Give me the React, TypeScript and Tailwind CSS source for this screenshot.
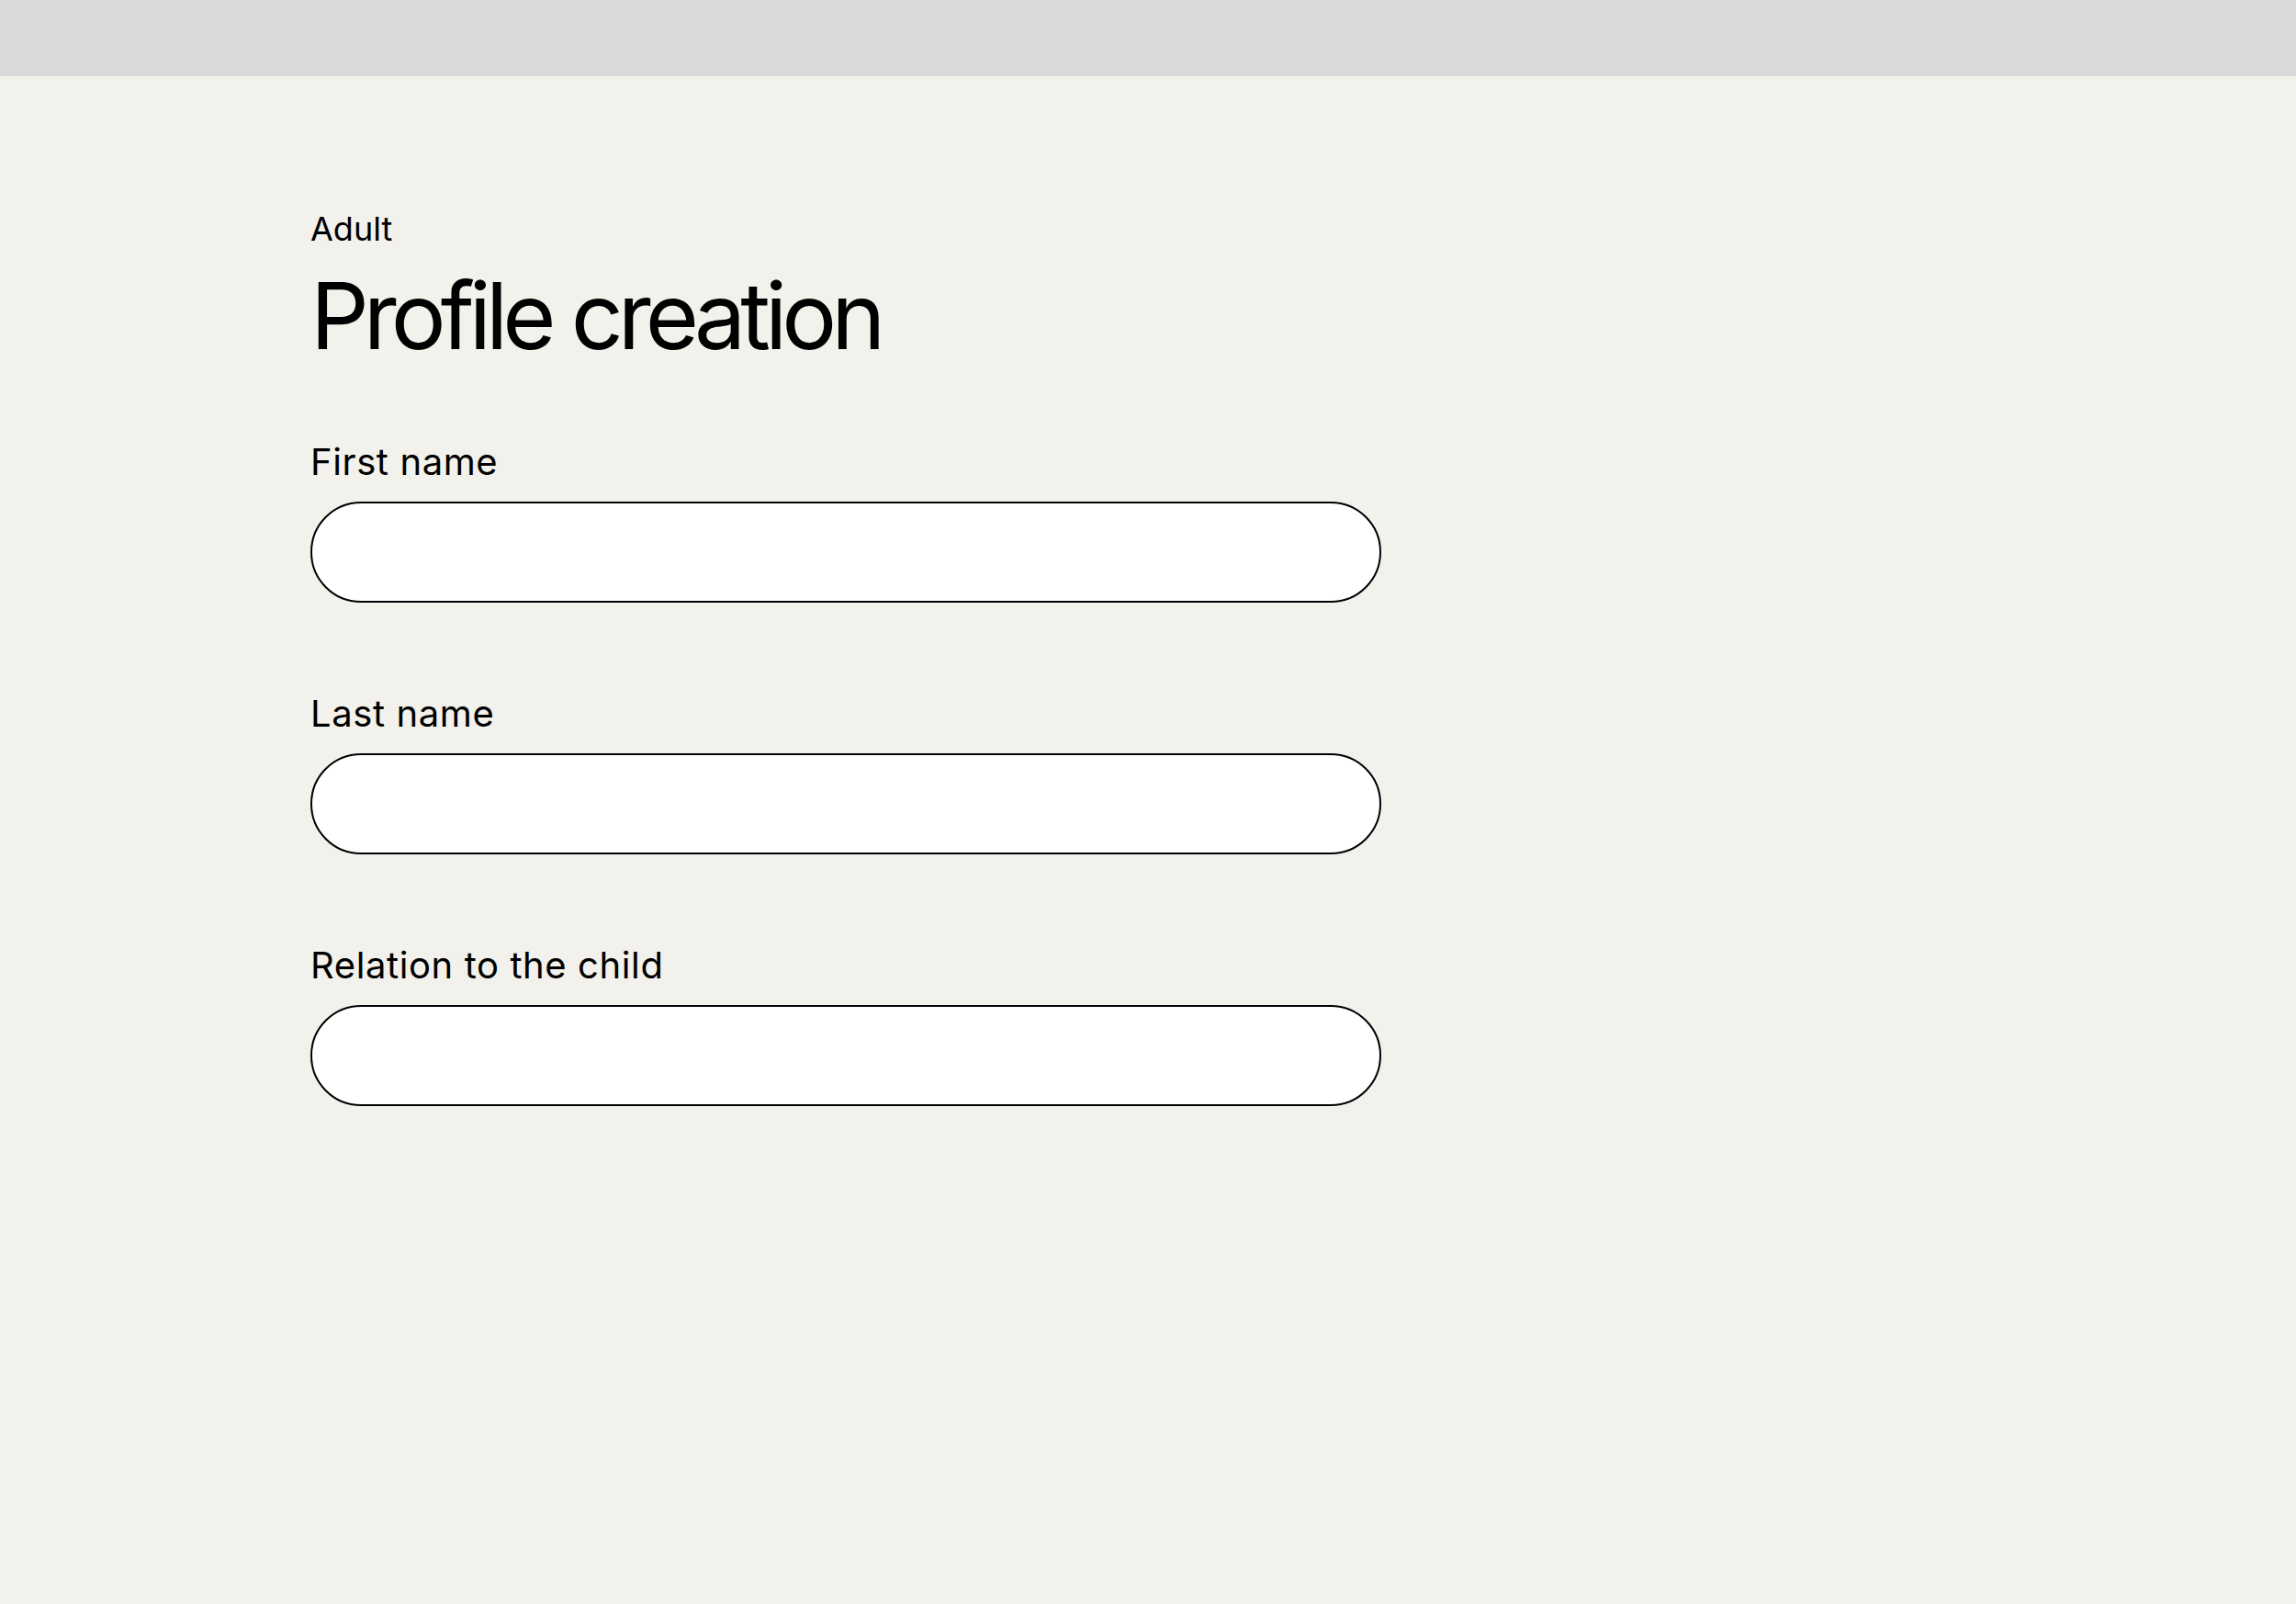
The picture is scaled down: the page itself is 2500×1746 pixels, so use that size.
const fields = ["First name", "Last name", "Relation to the child"];

export default function App() {
  return (
    <div className="min-h-[1746px] bg-[#f2f1ec] font-['Inter',sans-serif] text-black">
      <div className="h-[83px] bg-[#d9d9d9]" />

      <main className="pl-[338px] pt-[148px]">
        <p className="text-[36px] leading-none">Adult</p>
        <h1 className="mt-[27px] text-[100px] leading-none tracking-[-0.06em]">
          Profile creation
        </h1>

        <form className="mt-[89px] flex w-[1166px] flex-col gap-[101px]">
          {fields.map((label) => (
            <div key={label} className="flex flex-col gap-[23px]">
              <label className="text-[40px] leading-none tracking-[0.015em]">{label}</label>
              <input
                type="text"
                className="h-[110px] w-full rounded-full border-2 border-black bg-white px-[50px] text-[36px] outline-none"
              />
            </div>
          ))}
        </form>
      </main>
    </div>
  );
}
